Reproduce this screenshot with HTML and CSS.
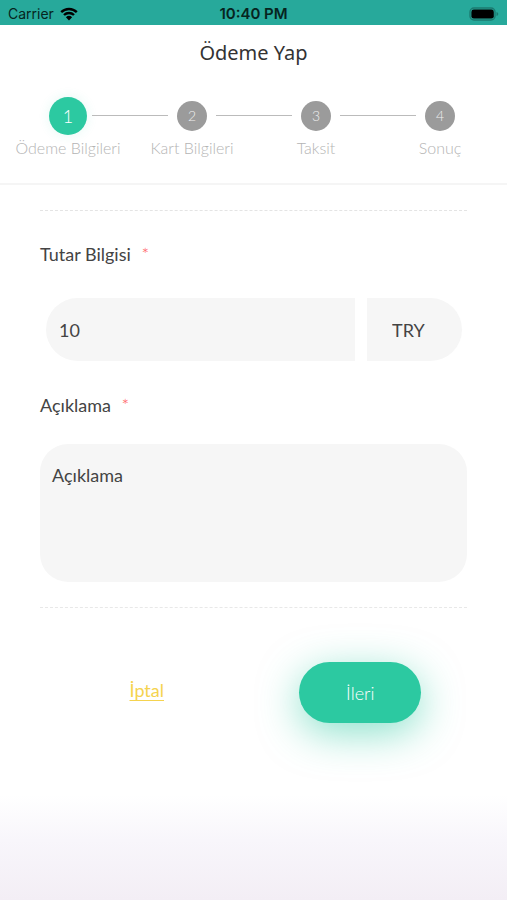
FILE: index.html
```html
<!DOCTYPE html>
<html lang="tr">
<head>
<meta charset="utf-8">
<meta name="viewport" content="width=device-width, initial-scale=1">
<title>Ödeme Yap</title>
<link rel="stylesheet" href="styles.css">
</head>
<body>
<div class="status-bar">
  <div class="carrier">
    <span>Carrier</span>
    <svg class="wifi" viewBox="0 0 18 14" aria-hidden="true">
      <path d="M1.2 5.2a11.2 11.2 0 0 1 15.6 0M4 8a7.2 7.2 0 0 1 10 0" fill="none" stroke="currentColor" stroke-width="2.4"/>
      <path d="M9 13.4 5.9 10.2a4.5 4.5 0 0 1 6.2 0z" fill="currentColor"/>
    </svg>
  </div>
  <time class="clock">10:40 PM</time>
  <svg class="battery" viewBox="0 0 30 14" aria-hidden="true">
    <rect x="1" y="1" width="25" height="12" rx="4" fill="none" stroke="#1c7a70" stroke-width="1.4"/>
    <rect x="2.4" y="2.6" width="22.4" height="9" rx="2.4" fill="#000"/>
    <path d="M27.5 5v4q1.8-.6 1.8-2t-1.8-2z" fill="#1c7a70"/>
  </svg>
</div>
<header class="header">
  <h1 class="title">Ödeme Yap</h1>
  <ol class="steps">
    <li class="step active"><div class="track"><span class="dot">1</span></div><span class="step-name">Ödeme Bilgileri</span></li>
    <li class="step"><div class="track"><span class="dot">2</span></div><span class="step-name">Kart Bilgileri</span></li>
    <li class="step"><div class="track"><span class="dot">3</span></div><span class="step-name">Taksit</span></li>
    <li class="step"><div class="track"><span class="dot">4</span></div><span class="step-name">Sonuç</span></li>
  </ol>
</header>
<main>
  <form class="form">
    <div class="fields">
      <label class="label" for="amount">Tutar Bilgisi <span class="required">*</span></label>
      <div class="amount-row">
        <input class="amount" id="amount" type="text" inputmode="decimal" value="10">
        <select class="currency" aria-label="Para birimi"><option>TRY</option></select>
      </div>
      <label class="label" for="note">Açıklama <span class="required">*</span></label>
      <textarea class="note" id="note" placeholder="Açıklama"></textarea>
    </div>
    <div class="actions">
      <a class="cancel" href="#">İptal</a>
      <button class="next" type="button">İleri</button>
    </div>
  </form>
</main>
</body>
</html>
```
FILE: styles.css
```css
* {
  box-sizing: border-box;
}

body {
  margin: 0;
  min-height: 100vh;
  font-family: Lato, "Open Sans", sans-serif;
  font-size: 18px;
  color: #444;
  background: linear-gradient(to top, #f3eef5 0, #f8f6fb 60px, #fff 105px) no-repeat #fff;
}

.status-bar {
  display: grid;
  grid-template-columns: 1fr auto 1fr;
  align-items: center;
  height: 25px;
  padding: 2px 8px 0;
  background: #27a99b;
  color: #062420;
  font-family: Inter, sans-serif;
  font-size: 14px;
}

.carrier {
  display: flex;
  align-items: center;
  gap: 6px;
}

.wifi {
  width: 18px;
  height: 14px;
  color: #000;
}

.clock {
  font-size: 15px;
  font-weight: 600;
}

.battery {
  justify-self: end;
  width: 30px;
  height: 14px;
}

.header {
  height: 160px;
  padding-top: 14px;
  border-bottom: 2px solid #f5f5f5;
}

.title {
  margin: 0;
  font-family: "Noto Sans", sans-serif;
  font-size: 20px;
  font-weight: 400;
  line-height: 28px;
  text-align: center;
  color: #333;
}

.steps {
  display: grid;
  grid-template-columns: repeat(4, 1fr);
  margin: 28px 0 0;
  padding: 0 5px 0 6px;
  list-style: none;
}

.step {
  text-align: center;
}

.track {
  display: flex;
  align-items: center;
  justify-content: center;
  gap: 9px;
  height: 41px;
}

.track::before,
.track::after {
  content: "";
  flex: 1;
  height: 1px;
  background: #bbb;
}

.step:first-child .track::before,
.step:last-child .track::after {
  background: none;
}

.dot {
  display: flex;
  align-items: center;
  justify-content: center;
  width: 30px;
  height: 30px;
  border-radius: 50%;
  background: #9b9b9b;
  color: #eee;
  font-size: 14px;
  font-weight: 300;
}

.active .track {
  gap: 5px;
}

.active .dot {
  width: 38px;
  height: 38px;
  background: #2cc9a1;
  color: #fff;
  font-size: 18px;
  box-shadow: 0 0 12px #2cc9a11f;
}

.step-name {
  display: block;
  font-size: 16px;
  font-weight: 300;
  line-height: 24px;
  white-space: nowrap;
  color: #b4b4b4;
}

.fields {
  margin: 25px 40px 0;
  padding: 27px 0 25px;
  border-top: 1px dashed #e4e4e4;
  border-bottom: 1px dashed #e8e8e8;
}

.label {
  display: block;
  line-height: 32px;
}

.required {
  margin-left: 6px;
  color: #f55;
  font-weight: 300;
}

.amount-row {
  display: flex;
  gap: 12px;
  margin: 28px 5px 28px 6px;
}

.amount,
.currency,
.note {
  display: block;
  border: 0;
  outline: 0;
  background: #f6f6f6;
  color: #444;
  font: inherit;
}

.amount {
  flex: 1;
  min-width: 0;
  height: 63px;
  padding: 0 13px;
  border-radius: 32px 0 0 32px;
}

.currency {
  width: 95px;
  height: 63px;
  padding: 0 25px;
  border-radius: 0 32px 32px 0;
  appearance: none;
}

.note {
  width: 100%;
  height: 138px;
  margin-top: 23px;
  padding: 16px 12px;
  border-radius: 28px;
  line-height: 30px;
  resize: none;
}

.note::placeholder {
  color: #444;
  opacity: 1;
}

.actions {
  display: grid;
  grid-template-columns: 1fr 1fr;
  justify-items: center;
  padding: 54px 40px 0;
}

.cancel {
  padding-top: 16px;
  color: #f5d34f;
  line-height: 24px;
  text-decoration-thickness: 1px;
  text-underline-offset: 3px;
}

.next {
  width: 122px;
  height: 61px;
  border: 0;
  border-radius: 31px;
  background: #2cc9a1;
  color: #fff;
  font: inherit;
  font-weight: 300;
  box-shadow: 0 10px 40px #2cc9a18c;
}
```
